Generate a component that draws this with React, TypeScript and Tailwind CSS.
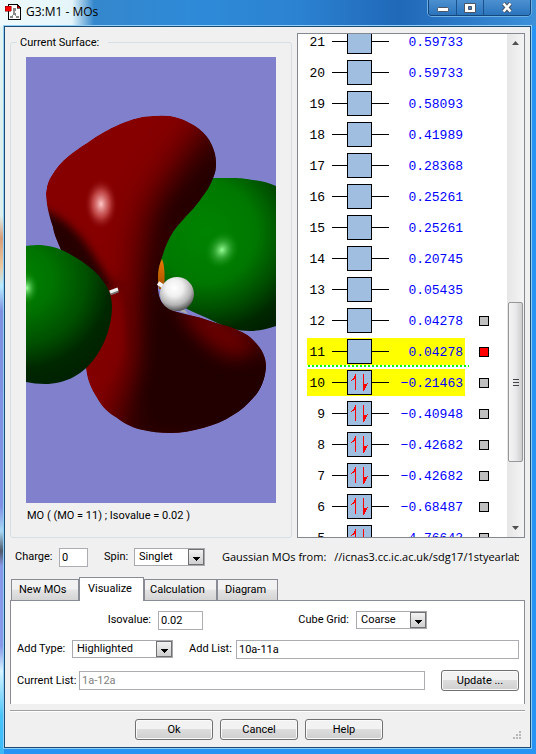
import { useState, type ReactNode } from "react";

type Level = { n: number; energy: string; box?: boolean };

const LEVELS: Level[] = [
  { n: 21, energy: "0.59733" },
  { n: 20, energy: "0.59733" },
  { n: 19, energy: "0.58093" },
  { n: 18, energy: "0.41989" },
  { n: 17, energy: "0.28368" },
  { n: 16, energy: "0.25261" },
  { n: 15, energy: "0.25261" },
  { n: 14, energy: "0.20745" },
  { n: 13, energy: "0.05435" },
  { n: 12, energy: "0.04278", box: true },
  { n: 11, energy: "0.04278", box: true },
  { n: 10, energy: "−0.21463", box: true },
  { n: 9, energy: "−0.40948", box: true },
  { n: 8, energy: "−0.42682", box: true },
  { n: 7, energy: "−0.42682", box: true },
  { n: 6, energy: "−0.68487", box: true },
  { n: 5, energy: "−4.76643", box: true },
];

const HOMO = 10;

function SpinArrows() {
  return (
    <svg viewBox="0 0 23 23" className="h-[23px] w-[23px]" shapeRendering="crispEdges" aria-hidden="true">
      <path d="M7 3h1v16H7zM6 5h1v3H6zM5 7h1v2H5zM4 8h1v1H4zM3 9h1v1H3z" fill="#f00" />
      <path d="M15 3h1v17h-1zM16 13h1v6h-1zM17 13h1v4h-1zM18 13h1v2h-1zM19 12h1v1h-1z" fill="#f00" />
    </svg>
  );
}

function LevelRow({ level, highlighted }: { level: Level; highlighted: boolean }) {
  return (
    <li className="flex h-[31px] shrink-0 items-center">
      <div className={`relative flex h-[27px] w-[158px] shrink-0 items-center ${highlighted ? "bg-[#ff0]" : ""}`}>
        <span className="w-[18px] pt-[2px] text-right">{level.n}</span>
        <span className="ml-[7px] h-px w-[15px] bg-black" />
        <span className="flex h-[25px] w-[25px] items-center justify-center border border-black bg-[#a0bedf]">
          {level.n <= HOMO && <SpinArrows />}
        </span>
        <span className="h-px w-[17px] bg-black" />
        <span className="flex-1 pr-[2px] pt-[2px] text-right text-[#00f]">{level.energy}</span>
        {level.n === HOMO + 1 && (
          <span className="absolute -bottom-[2px] left-px h-[2px] w-[161px] bg-[repeating-linear-gradient(90deg,#0f0_0_2px,#fff_2px_4px)]" />
        )}
      </div>
      {level.box && (
        <button
          type="button"
          aria-label={`Surface for orbital ${level.n}`}
          className={`ml-[14px] h-[10px] w-[10px] border border-black ${level.n === 11 ? "bg-[#f00]" : "bg-[#c0c0c0]"}`}
        />
      )}
    </li>
  );
}

const LOBE =
  "M20 136C21 128 22 124 26 118C34 104 48 94 61 86C72 78 82 72 94 67C106 62 116 59 127 59C144 57 155 61 164 66C178 73 186 84 189 97C191 107 190 115 187 121C184 129 180 135 176 140C170 149 165 154 161 158C155 165 150 170 147 175C142 183 139 190 137 197C134 206 132 212 132 222C131 240 134 250 151 255C161 258 171 259 181 263C191 267 199 268 207 271C216 275 223 278 228 284C236 292 240 300 240 310C239 323 234 334 227 341C221 348 214 354 207 358C198 364 188 368 177 371C166 374 155 376 144 376C134 376 125 375 117 373C107 371 99 367 91 361C82 356 76 350 71 341C65 332 61 322 60 311L40 260L35 193C32 185 28 178 27 170C22 155 20 146 20 136Z";

function SurfaceView() {
  return (
    <svg
      viewBox="0 0 250 446"
      preserveAspectRatio="xMidYMid slice"
      className="block h-[446px] w-full bg-[#8080cc]"
      role="img"
      aria-label="Molecular orbital isosurface"
    >
      <defs>
        <clipPath id="lobe">
          <path d={LOBE} />
        </clipPath>
        <filter id="b4" x="-50%" y="-50%" width="200%" height="200%" colorInterpolationFilters="sRGB">
          <feGaussianBlur stdDeviation="4" />
        </filter>
        <filter id="b8" x="-50%" y="-50%" width="200%" height="200%" colorInterpolationFilters="sRGB">
          <feGaussianBlur stdDeviation="9" />
        </filter>
        <filter id="b14" x="-50%" y="-50%" width="200%" height="200%" colorInterpolationFilters="sRGB">
          <feGaussianBlur stdDeviation="18" />
        </filter>
        <radialGradient id="leftGreen" gradientUnits="userSpaceOnUse" cx="-5" cy="222" r="105">
          <stop offset="0" stopColor="#008200" />
          <stop offset="0.3" stopColor="#007400" />
          <stop offset="0.62" stopColor="#005000" />
          <stop offset="0.85" stopColor="#002800" />
          <stop offset="1" stopColor="#002200" />
        </radialGradient>
        <radialGradient id="rightGreen" gradientUnits="userSpaceOnUse" cx="180" cy="175" r="112">
          <stop offset="0" stopColor="#008400" />
          <stop offset="0.45" stopColor="#007800" />
          <stop offset="0.68" stopColor="#005000" />
          <stop offset="0.88" stopColor="#002800" />
          <stop offset="1" stopColor="#002000" />
        </radialGradient>
        <radialGradient id="ball" cx="0.42" cy="0.32" r="0.72">
          <stop offset="0" stopColor="#fff" />
          <stop offset="0.35" stopColor="#f0f0f0" />
          <stop offset="0.7" stopColor="#b4b4b4" />
          <stop offset="1" stopColor="#444" />
        </radialGradient>
        <radialGradient id="greenGlint">
          <stop offset="0" stopColor="#98ff98" />
          <stop offset="0.45" stopColor="#48b848" stopOpacity="0.6" />
          <stop offset="1" stopColor="#008400" stopOpacity="0" />
        </radialGradient>
        <radialGradient id="redGlint">
          <stop offset="0" stopColor="#ffc8c8" />
          <stop offset="0.5" stopColor="#d05858" stopOpacity="0.75" />
          <stop offset="1" stopColor="#840000" stopOpacity="0" />
        </radialGradient>
        <linearGradient id="orange" x1="0" y1="0" x2="0" y2="1">
          <stop offset="0" stopColor="#f07800" />
          <stop offset="1" stopColor="#a05000" />
        </linearGradient>
      </defs>

      {/* right lobe */}
      <path
        d="M180 121H207C216 121 221 122 227 123C236 124 243 126 250 129V269C241 272 233 274 224 274C218 274 212 273 207 272C197 269 189 265 181 261C174 258 167 255 161 252L130 225V180Z"
        fill="url(#rightGreen)"
      />
      <ellipse cx="196" cy="193" rx="17" ry="20" fill="url(#greenGlint)" transform="rotate(28 196 193)" />

      {/* central lobe */}
      <g clipPath="url(#lobe)">
        <path d={LOBE} fill="#860000" />
        <path
          d="M215 40L172 80C155 110 138 125 126 150C114 175 116 215 112 250C114 290 114 320 92 352L85 400H270V290L190 250L150 260L150 180L215 120Z"
          fill="#220000"
          filter="url(#b14)"
        />
        <path
          d="M205 98C175 118 150 138 138 162C128 190 126 225 122 250C124 285 124 320 114 345C140 375 190 360 250 340L255 310C215 320 175 300 156 262L140 240L145 180L205 125Z"
          fill="#220000"
          filter="url(#b8)"
        />
        <path d="M156 256C182 248 215 264 230 290C215 312 182 300 156 256Z" fill="#680000" filter="url(#b8)" />
        <path d="M12 150C32 158 50 170 66 196C76 212 84 224 90 236L60 228L22 195Z" fill="#260000" filter="url(#b4)" />
        <path d="M91 222C99 245 103 265 101 290" fill="none" stroke="#480000" strokeWidth="4" filter="url(#b4)" opacity="0.7" />
        <path d="M84 234L93 234C97 250 99 268 98 290L84 325L66 325L60 300Z" fill="#800000" filter="url(#b4)" />
        <ellipse cx="75" cy="147" rx="17" ry="26" fill="url(#redGlint)" />
      </g>

      {/* left lobe */}
      <path
        d="M0 189C5 188 10 188 15 188C25 189 32 191 38 194C52 201 64 209 73 219C82 229 86 238 86 250C86 266 80 285 71 298C58 318 39 327 19 327C12 327 6 326 0 325Z"
        fill="url(#leftGreen)"
      />
      <ellipse cx="1" cy="231" rx="12" ry="17" fill="url(#greenGlint)" />

      {/* atoms and bonds */}
      <path d="M84 236L92 233" stroke="#777" strokeWidth="5" />
      <path d="M84 235L92 232" stroke="#eee" strokeWidth="3" />
      <path d="M136 202C139 209 139 220 138 232H133C131 220 132 209 136 202Z" fill="url(#orange)" />
      <path d="M132 226L138 230" stroke="#f4f4f4" strokeWidth="4" />
      <path d="M153 254L162 257L158 252Z" fill="#aaa" />
      <circle cx="151" cy="237" r="17" fill="url(#ball)" />
    </svg>
  );
}

function Combo({ id, value, options, width }: { id: string; value: string; options: string[]; width: string }) {
  return (
    <span className={`grid h-[18px] shrink-0 border border-[#a9a9ad] bg-white ${width}`}>
      <select
        id={id}
        defaultValue={value}
        className="col-start-1 row-start-1 h-4 w-full appearance-none bg-transparent pl-1 leading-[14px] outline-none"
      >
        {options.map((o) => (
          <option key={o}>{o}</option>
        ))}
      </select>
      <span className="pointer-events-none col-start-1 row-start-1 flex h-4 w-4 items-center justify-center justify-self-end border border-[#707070] bg-linear-to-b from-[#f2f2f2] to-[#cfcfcf]">
        <svg viewBox="0 0 7 4" className="mt-[3px] h-1 w-[7px]" shapeRendering="crispEdges" aria-hidden="true">
          <path d="M0 0h7v1h-1v1h-1v1h-1v1h-1v-1h-1v-1h-1v-1h-1z" />
        </svg>
      </span>
    </span>
  );
}

function PushButton({ children }: { children: ReactNode }) {
  return (
    <button
      type="button"
      className="h-[21px] w-[78px] shrink-0 rounded-[3px] border border-[#707070] bg-[linear-gradient(#f2f2f2_0_45%,#dddddd_50%,#cfcfcf)] leading-4 shadow-[inset_0_0_0_1px_#fafafa]"
    >
      {children}
    </button>
  );
}

const FIELD = "h-[19px] border border-[#abadb3] bg-white px-[2px] outline-none";

function TitleBar() {
  return (
    <header className="flex h-[26px] items-start pl-[5px]">
      <svg viewBox="0 0 16 16" className="mt-1 h-4 w-4" shapeRendering="crispEdges" aria-hidden="true">
        <path d="M3 .5h9.5l3 3v12H3z" fill="#fff" stroke="#000" />
        <path d="M12 1v3h3z" fill="#f00" stroke="#000" strokeWidth="0.6" />
        <path d="M9 6v4M9 10l-3 3M9 10l3 3" stroke="#909090" strokeWidth="1.4" />
        <path d="M8 4h3v3H8zM8 9h3v2H8zM5 12h3v2H5zM11 12h3v2h-3z" fill="#888" />
        <path d="M0 2h6v5H0z" fill="#f00" stroke="#700" strokeWidth="0.5" />
      </svg>
      <h1 className="ml-[5px] mt-1 flex-1 font-['Open_Sans',sans-serif] text-[12px] leading-4 text-black">G3:M1 - MOs</h1>
      <div className="mr-[5px] flex h-4 overflow-hidden rounded-b-[4px] border border-t-0 border-[#12467c] shadow-[0_0_0_1px_#6fb0e4]">
        <button type="button" aria-label="Minimize" className="flex w-7 items-center justify-center border-r border-[#1a5290] bg-linear-to-b from-[#4c90d0] to-[#2a74bc]">
          <svg viewBox="0 0 12 5" className="mt-1 h-[5px] w-3" aria-hidden="true">
            <rect x=".5" y=".5" width="11" height="4" rx="1" fill="#fff" stroke="#4a5568" />
          </svg>
        </button>
        <button type="button" aria-label="Maximize" className="flex w-[27px] items-center justify-center border-r border-[#1a5290] bg-linear-to-b from-[#4c90d0] to-[#2a74bc]">
          <svg viewBox="0 0 12 10" className="h-[10px] w-3" aria-hidden="true">
            <path d="M.5.5h11v9H.5zM4.5 3.5v3h3v-3z" fill="#fff" fillRule="evenodd" stroke="#4a5568" />
          </svg>
        </button>
        <button type="button" aria-label="Close" className="flex w-[46px] items-center justify-center bg-linear-to-b from-[#4c90d0] to-[#2a74bc]">
          <svg viewBox="0 0 12 11" className="h-[11px] w-3" aria-hidden="true">
            <path d="M2.5 1.5l7 8M9.5 1.5l-7 8" stroke="#4a5568" strokeWidth="4.4" />
            <path d="M2.5 1.5l7 8M9.5 1.5l-7 8" stroke="#fff" strokeWidth="2.6" />
          </svg>
        </button>
      </div>
    </header>
  );
}

function OrbitalList() {
  return (
    <section className="flex w-[228px] shrink-0 overflow-hidden border border-[#828790] bg-white">
      <ul className="-mt-[8px] flex h-[504px] flex-1 flex-col pl-[9px] font-['Liberation_Mono',monospace] text-[13px] leading-4">
        {LEVELS.map((l) => (
          <LevelRow key={l.n} level={l} highlighted={l.n === 10 || l.n === 11} />
        ))}
      </ul>
      <div className="flex w-[17px] shrink-0 flex-col items-center bg-linear-to-r from-[#e6e6e6] to-[#f4f4f4]">
        <svg viewBox="0 0 17 17" className="h-[17px] w-[17px]" aria-hidden="true">
          <path d="M5 11l3.5-4L12 11z" fill="#505050" />
        </svg>
        <div className="mt-[251px] flex h-[160px] w-[15px] flex-col items-center justify-center gap-[2px] rounded-[2px] border border-[#979797] bg-linear-to-r from-[#f5f5f5] via-[#e9e9eb] to-[#cfcfcf]">
          <span className="h-px w-[6px] bg-[#444]" />
          <span className="h-px w-[6px] bg-[#444]" />
          <span className="h-px w-[6px] bg-[#444]" />
        </div>
        <svg viewBox="0 0 17 17" className="mt-auto h-[17px] w-[17px]" aria-hidden="true">
          <path d="M5 6l3.5 4L12 6z" fill="#505050" />
        </svg>
      </div>
    </section>
  );
}

const TABS = [
  { name: "New MOs", size: "w-[68px] pl-[7px]" },
  { name: "Visualize", size: "w-[65px] pl-[8px]" },
  { name: "Calculation", size: "w-[73px] pl-[5px]" },
  { name: "Diagram", size: "w-[61px] pl-[7px]" },
];

export default function App() {
  const [tab, setTab] = useState("Visualize");
  return (
    <div className="bg-[linear-gradient(90deg,#eefafb_0,#e4f5fa_72px,#3487cc_94px,#2e8ad8_200px,#2b82d0_300px,#2068b8_400px,#3c90da_100%)] font-[Roboto,sans-serif] text-[11px] leading-4 text-black">
      <TitleBar />
      <div className="bg-[linear-gradient(#e4f4f2_0,#dcefed_110px,#dcefed_190px,#d89c78_212px,#ecc8a0_240px,#b8ecff_260px,#8090e0_285px,#8090e4_480px,#a8d8f4_505px,#505868_525px,#8898e8_540px,#8898e8_620px,#d8f4ff_645px,#48c4f8_690px,#3cb8f8_100%)] pl-1">
        <div className="bg-[#2794f4] pb-[6px] pr-[5px]">
          <main className="flex flex-col border border-[#1c4c74] bg-[#f0f0f0] px-[5px] shadow-[0_0_0_1px_#90d0f8]">
            <div className="flex gap-[5px] pt-[6px]">
              <fieldset className="min-w-0 flex-1 rounded-[3px] border border-[#d5dfe5] px-[15px] pb-[13px]">
                <legend className="-ml-[9px] pl-[3px] pr-[9px] pt-[2px]">Current Surface:</legend>
                <div className="mt-[6px]">
                  <SurfaceView />
                </div>
                <p className="mt-[5px] pl-px">MO ( (MO = 11) ; Isovalue = 0.02 )</p>
              </fieldset>
              <OrbitalList />
            </div>

            <div className="mt-[9px] flex h-5 items-center pl-[5px] pr-[6px]">
              <label htmlFor="charge" className="w-[44px] shrink-0">Charge:</label>
              <input id="charge" defaultValue="0" className={`${FIELD} w-[29px] shrink-0`} />
              <label htmlFor="spin" className="ml-4 w-[30px] shrink-0">Spin:</label>
              <Combo id="spin" value="Singlet" options={["Singlet", "Triplet"]} width="w-[71px]" />
              <p className="ml-[17px] flex min-w-0 flex-1 gap-2 whitespace-nowrap font-['Open_Sans',sans-serif]">
                <span className="shrink-0">Gaussian MOs from:</span>
                <span className="min-w-0 flex-1 overflow-hidden">//icnas3.cc.ic.ac.uk/sdg17/1styearlab</span>
              </p>
            </div>

            <div role="tablist" className="mt-[9px] flex h-6 items-end pl-px">
              {TABS.map((t) => (
                <button
                  key={t.name}
                  type="button"
                  role="tab"
                  aria-selected={t.name === tab}
                  onClick={() => setTab(t.name)}
                  className={`shrink-0 border-l border-r border-t border-[#898c95] text-left ${t.size} ${
                    t.name === tab
                      ? "z-10 -mb-px h-6 bg-white pb-px"
                      : "h-[21px] bg-[linear-gradient(#f2f2f2_0_45%,#e4e4e4_50%,#d4d4d4)]"
                  }`}
                >
                  {t.name}
                </button>
              ))}
            </div>

            <section className="flex flex-col border border-b-0 border-[#898c95] bg-white pb-[13px] pl-[6px] pr-[5px] pt-[9px]">
              <div className="flex h-5 items-center">
                <label htmlFor="iso" className="w-[141px] shrink-0 pr-[7px] text-right">Isovalue:</label>
                <input id="iso" defaultValue="0.02" className={`${FIELD} w-[45px]`} />
                <label htmlFor="grid" className="ml-auto pr-[7px]">Cube Grid:</label>
                <Combo id="grid" value="Coarse" options={["Coarse", "Medium", "Fine"]} width="w-[71px] mr-[92px]" />
              </div>
              <div className="mt-[9px] flex h-5 items-center">
                <label htmlFor="type" className="w-[55px] shrink-0">Add Type:</label>
                <Combo id="type" value="Highlighted" options={["Highlighted", "All"]} width="w-[101px]" />
                <label htmlFor="add" className="ml-4 w-[47px] shrink-0">Add List:</label>
                <input id="add" defaultValue="10a-11a" className={`${FIELD} min-w-0 flex-1`} />
              </div>
              <div className="mt-[11px] flex h-[21px] items-center">
                <label htmlFor="current" className="w-[62px] shrink-0">Current List:</label>
                <input id="current" readOnly value="1a-12a" className={`${FIELD} mr-4 min-w-0 flex-1 text-[#808080]`} />
                <PushButton>Update ...</PushButton>
              </div>
            </section>

            <footer className="mt-[6px] grid grid-cols-[1fr_auto_1fr_17px] border-t border-[#a0a0a0] pb-[7px] pt-2 shadow-[inset_0_1px_0_#fff]">
              <div className="col-start-2 flex gap-[7px]">
                <PushButton>Ok</PushButton>
                <PushButton>Cancel</PushButton>
                <PushButton>Help</PushButton>
              </div>
              <svg viewBox="0 0 9 9" className="col-start-4 mr-[3px] h-[9px] w-[9px] self-end justify-self-end" aria-hidden="true">
                <path d="M6 0h2v2H6zM3 3h2v2H3zM6 3h2v2H6zM0 6h2v2H0zM3 6h2v2H3zM6 6h2v2H6z" fill="#b8b8b8" />
              </svg>
            </footer>
          </main>
        </div>
      </div>
    </div>
  );
}
